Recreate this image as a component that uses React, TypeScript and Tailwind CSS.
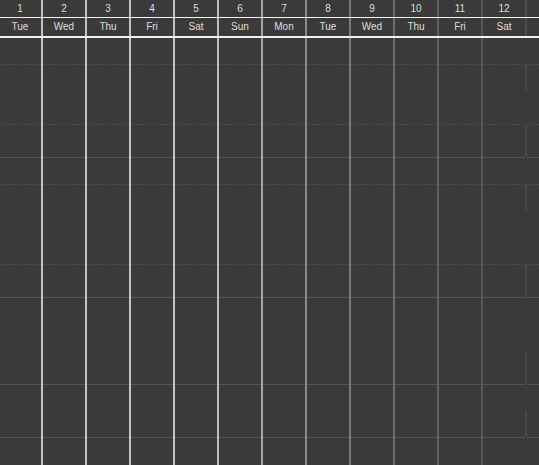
import React from "react";

type Col = { num: number; day: string; line: string; bodyLine: boolean };

const COLS: Col[] = [
  { num: 1, day: "Tue", line: "border-[#c4c4c4]", bodyLine: true },
  { num: 2, day: "Wed", line: "border-[#c4c4c4]", bodyLine: true },
  { num: 3, day: "Thu", line: "border-[#c4c4c4]", bodyLine: true },
  { num: 4, day: "Fri", line: "border-[#c2c2c2]", bodyLine: true },
  { num: 5, day: "Sat", line: "border-[#bcbcbc]", bodyLine: true },
  { num: 6, day: "Sun", line: "border-[#a6a6a6]", bodyLine: true },
  { num: 7, day: "Mon", line: "border-[#8a8a8a]", bodyLine: true },
  { num: 8, day: "Tue", line: "border-[#7a7a7a]", bodyLine: true },
  { num: 9, day: "Wed", line: "border-[#6c6c6c]", bodyLine: true },
  { num: 10, day: "Thu", line: "border-[#606060]", bodyLine: true },
  { num: 11, day: "Fri", line: "border-[#575757]", bodyLine: true },
  { num: 12, day: "Sat", line: "border-[#4c4c4c]", bodyLine: false },
  // next column only peeks in at the right edge, its labels are off-screen
  { num: 13, day: "", line: "border-transparent", bodyLine: false },
];

// row heights (content) and whether the bottom rule is dashed
const ROWS: { h: string; dashed: boolean; seg?: "top" | "full" | "bottom"; segH?: string }[] = [
  { h: "h-[26px]", dashed: true },
  { h: "h-[59px]", dashed: true, seg: "top", segH: "h-[26px]" },
  { h: "h-[32px]", dashed: false, seg: "full" },
  { h: "h-[26px]", dashed: true },
  { h: "h-[79px]", dashed: true, seg: "top", segH: "h-[26px]" },
  { h: "h-[32px]", dashed: false, seg: "full" },
  { h: "h-[86px]", dashed: false, seg: "bottom", segH: "h-[33px]" },
  { h: "h-[52px]", dashed: false, seg: "bottom", segH: "h-[26px]" },
  { h: "h-[40px]", dashed: false },
];

function HeaderRow({ tall, field }: { tall: boolean; field: "num" | "day" }) {
  return (
    <div className={`flex -ml-px ${tall ? "h-[18px]" : "h-[17px]"}`}>
      {COLS.map((c) => (
        <div
          key={c.num}
          className={`w-[44px] shrink-0 border-r-2 ${c.line} flex items-center justify-center`}
        >
          {c.day && (
            <span className="text-[10px] leading-none text-[#dedede]">{c[field]}</span>
          )}
        </div>
      ))}
    </div>
  );
}

export default function App() {
  return (
    <div
      className="w-[539px] h-[465px] overflow-hidden bg-[#3a3a3a]"
      style={{ fontFamily: '"Liberation Sans", Arial, sans-serif' }}
    >
      <HeaderRow tall={false} field="num" />
      <div className="h-px bg-[#f2f2f2]" />
      <HeaderRow tall field="day" />
      <div className="h-[2px] bg-[#f2f2f2]" />

      {/* timeline body */}
      <div className="flex -ml-px">
        {COLS.map((c) => (
          <div
            key={c.num}
            className={`w-[44px] shrink-0 flex flex-col ${
              c.bodyLine ? `border-r-2 ${c.line}` : "border-r-2 border-transparent"
            }`}
          >
            {ROWS.map((r, i) => (
              <div
                key={i}
                className={`${r.h} box-content border-b ${
                  r.dashed ? "border-dashed border-[#4c4c4c]" : "border-[#545454]"
                } relative`}
              >
                {c.num === 12 && r.seg && (
                  <div
                    className={`absolute -right-[2px] w-[2px] bg-[#484848] ${
                      r.seg === "full" ? "top-0 bottom-0" : r.seg === "top" ? `top-0 ${r.segH}` : `bottom-0 ${r.segH}`
                    }`}
                  />
                )}
              </div>
            ))}
          </div>
        ))}
      </div>
    </div>
  );
}
